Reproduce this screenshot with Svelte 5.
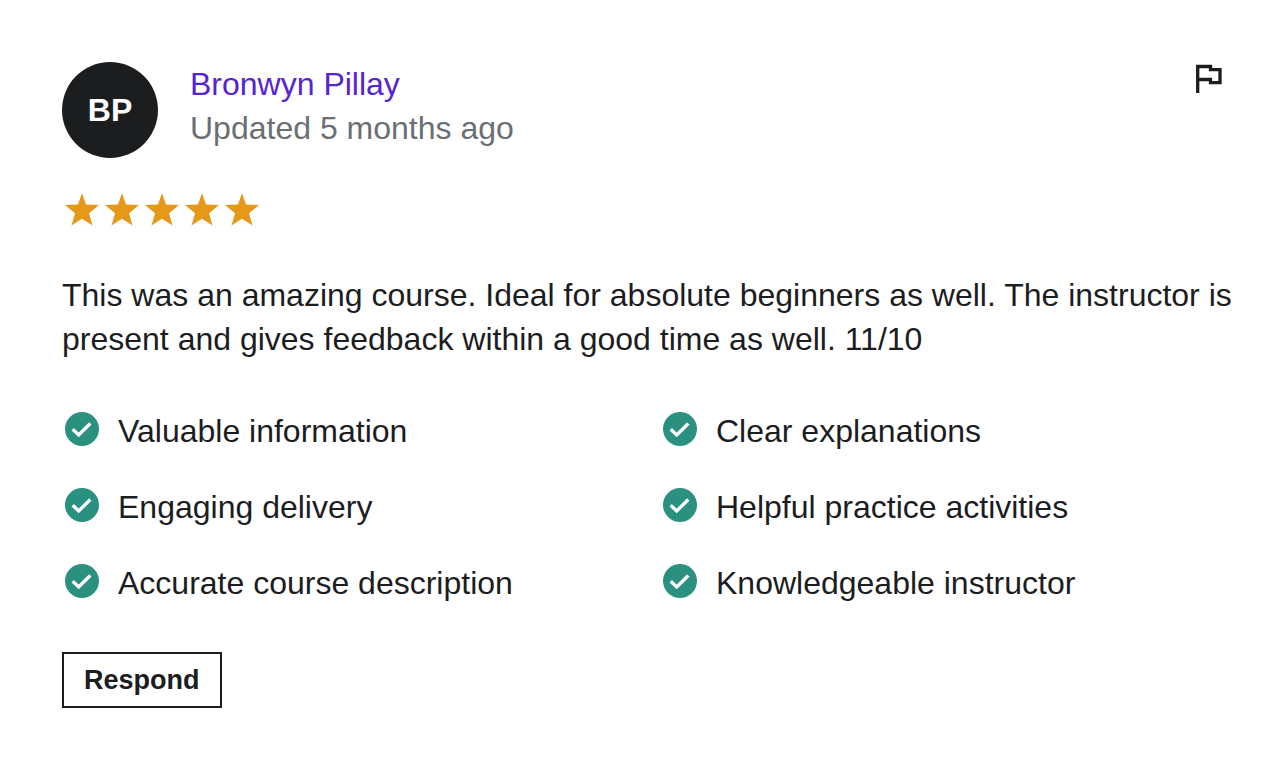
<script>
  const tags = [
    'Valuable information',
    'Clear explanations',
    'Engaging delivery',
    'Helpful practice activities',
    'Accurate course description',
    'Knowledgeable instructor'
  ];
</script>

<article class="review">
  <header>
    <div class="avatar" aria-hidden="true">BP</div>
    <div class="who">
      <a href="#profile">Bronwyn Pillay</a>
      <p class="date">Updated 5 months ago</p>
    </div>
    <button class="flag" aria-label="Report review">
      <svg viewBox="0 0 40 40" width="40" height="40" fill="none" stroke="#1c1d1f" stroke-width="3.300">
        <path d="M11.700 31V4.500H24.500V7.700H34V20.700H24.500V17.500H11.700" />
      </svg>
    </button>
  </header>

  <div class="stars" role="img" aria-label="5 out of 5 stars">
    {#each [1, 2, 3, 4, 5] as star (star)}
      <svg viewBox="0 0 40 40" width="40" height="40">
        <path d="M20 3L24 14.400L37 15.100L27 23.200L30.500 35.500L20 28.700L9.500 35.500L13 23.200L3 15.100L16 14.400Z" fill="#e59819" />
      </svg>
    {/each}
  </div>

  <p class="text">
    This was an amazing course. Ideal for absolute beginners as well. The instructor is present and gives feedback within a good time as well. 11/10
  </p>

  <ul>
    {#each tags as tag (tag)}
      <li>
        <svg viewBox="0 0 40 40" width="40" height="40">
          <circle cx="20" cy="20" r="17" fill="#2a9080" />
          <path d="M10.700 20.300L16.700 26L28.300 14.500" fill="none" stroke="#fff" stroke-width="3.300" />
        </svg>
        <span>{tag}</span>
      </li>
    {/each}
  </ul>

  <button class="respond">Respond</button>
</article>

<style>
  :global(body) {
    margin: 0;
    background: #fff;
  }
  .review {
    padding: 62px;
    color: #1c1d1f;
    font: 32px/44px "Liberation Sans", Arial, sans-serif;
  }
  header {
    display: flex;
    align-items: flex-start;
    gap: 32px;
  }
  .avatar {
    display: grid;
    place-items: center;
    width: 96px;
    height: 96px;
    border-radius: 50%;
    background: #1c1d1f;
    color: #fff;
    font-weight: 700;
  }
  .who {
    flex: 1;
  }
  a {
    color: #5624d0;
    text-decoration: none;
  }
  p {
    margin: 0;
  }
  .date {
    color: #6a6f73;
  }
  button {
    background: #fff;
    color: inherit;
    cursor: pointer;
  }
  .flag {
    border: 0;
    padding: 0;
  }
  svg {
    display: block;
    flex: none;
  }
  .stars {
    display: flex;
    margin-top: 32px;
  }
  .text {
    margin: 43px -12px 0 0;
  }
  ul {
    display: grid;
    grid-template-columns: 1fr 1fr;
    gap: 32px;
    margin: 48px 0 47px;
    padding: 0;
    list-style: none;
  }
  li {
    display: flex;
    gap: 16px;
  }
  .respond {
    height: 56px;
    padding: 0 20px;
    border: 2px solid #1c1d1f;
    font: 700 27px/44px "Liberation Sans", Arial, sans-serif;
  }
</style>
